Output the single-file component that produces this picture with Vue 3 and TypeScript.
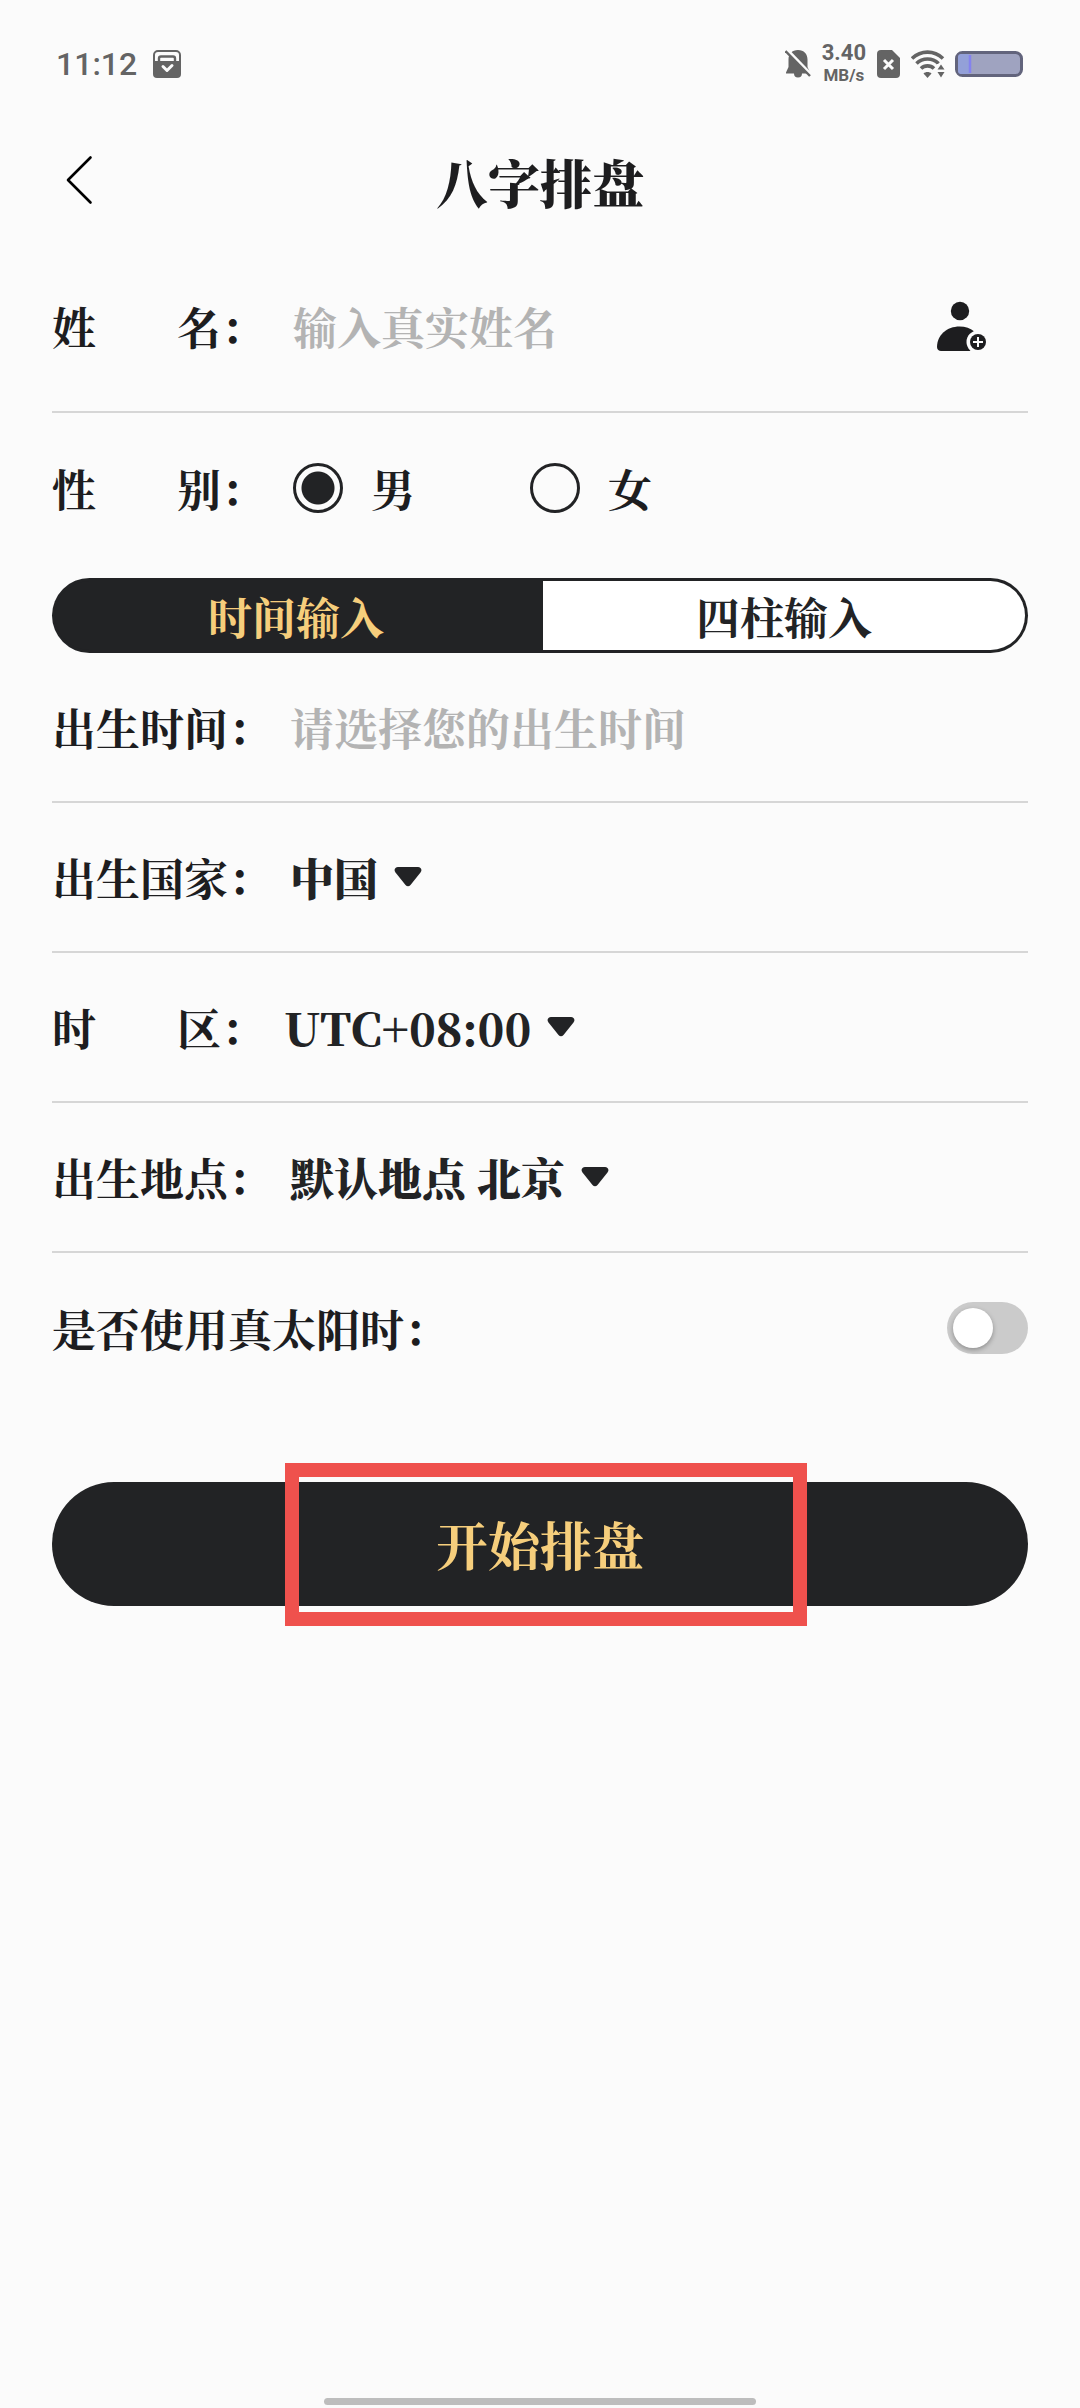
<script setup lang="ts">
import { ref } from 'vue'

type Gender = 'male' | 'female'
type Mode = 'time' | 'pillars'

const name = ref('')
const gender = ref<Gender>('male')
const mode = ref<Mode>('time')
const birthTime = ref('')
const country = ref('中国')
const timezone = ref('UTC+08:00')
const place = ref('默认地点 北京')
const trueSolarTime = ref(false)

const genders: { value: Gender; label: string }[] = [
  { value: 'male', label: '男' },
  { value: 'female', label: '女' },
]
const modes: { value: Mode; label: string }[] = [
  { value: 'time', label: '时间输入' },
  { value: 'pillars', label: '四柱输入' },
]
</script>

<template>
  <div class="page">
    <div class="status">
      <span class="clock">11:12</span>
      <svg class="pay" width="28" height="28" viewBox="0 0 28 28" aria-hidden="true">
        <path d="M1 13V5a4 4 0 0 1 4-4h18a4 4 0 0 1 4 4v8" fill="none" stroke="#646464" stroke-width="2" />
        <path d="M6 12V8.500a2 2 0 0 1 2-2h12a2 2 0 0 1 2 2V12" fill="none" stroke="#646464" stroke-width="2.400" />
        <path d="M0 11h28v13a4 4 0 0 1-4 4H4a4 4 0 0 1-4-4z" fill="#646464" />
        <path d="M10 16.500l4 4 5-5" fill="none" stroke="#fbfbfb" stroke-width="3" stroke-linecap="round" stroke-linejoin="round" />
      </svg>
      <span class="spacer"></span>
      <svg width="26" height="30" viewBox="0 0 26 30" aria-hidden="true">
        <path d="M13 1c6 0 9.500 4 9.500 9.500V18l2.500 5.500v1H17a4 4 0 0 1-8 0H1v-1L3.500 18v-7.500C3.500 5 7 1 13 1z" fill="#646464" />
        <path d="M2 0.500L26 25.500" stroke="#fbfbfb" stroke-width="3" />
        <path d="M0.500 2L25 27" stroke="#646464" stroke-width="2.400" />
      </svg>
      <span class="speed"><b>3.40</b><small>MB/s</small></span>
      <svg width="24" height="28" viewBox="0 0 24 28" aria-hidden="true">
        <path d="M4 0h11l8 8v16a4 4 0 0 1-4 4H4a4 4 0 0 1-4-4V4a4 4 0 0 1 4-4z" fill="#646464" />
        <path d="M7 10l9 9M16 10l-9 9" stroke="#fbfbfb" stroke-width="3" />
      </svg>
      <svg class="wifi" width="34" height="28" viewBox="0 0 34 28" aria-hidden="true">
        <g fill="none" stroke="#646464" stroke-width="3.600">
          <path d="M1 8.500C10 0 23 0 32 8.500" />
          <path d="M5.500 13.500c6-6 16-6 22 0" />
          <path d="M10 18.500c3.500-3.500 9.500-3.500 13 0" />
        </g>
        <path d="M12.500 23.500c2-2 6-2 8 0L16.500 28z" fill="#646464" />
        <path d="M26 14h8v14h-8z" fill="#fbfbfb" />
        <path d="M30 14.500l3.500 5h-7zM30 27.500l3.500-5.500h-7z" fill="#646464" />
      </svg>
      <svg width="68" height="26" viewBox="0 0 68 26" aria-hidden="true">
        <rect x="1.500" y="1.500" width="65" height="23" rx="6" fill="#9fa3c0" stroke="#62647c" stroke-width="3" />
        <path d="M6 3h8v20H6a3 3 0 0 1-3-3V6a3 3 0 0 1 3-3z" fill="#93a0d8" />
        <path d="M15 4v18" stroke="#8482ee" stroke-width="2.500" />
      </svg>
    </div>

    <header class="header">
      <button class="back" type="button" aria-label="返回">
        <svg width="28" height="50" viewBox="0 0 28 50" aria-hidden="true">
          <path d="M25.500 2.500L3 25l22.500 22.500" fill="none" stroke="#000" stroke-width="2.600" stroke-linecap="round" stroke-linejoin="round" />
        </svg>
      </button>
      <h1>八字排盘</h1>
    </header>

    <form class="form" @submit.prevent>
      <div class="row row-name">
        <label class="label short" for="name"><span>姓</span><span>名</span><span>：</span></label>
        <input id="name" v-model="name" class="text" type="text" placeholder="输入真实姓名" />
        <button class="contact" type="button" aria-label="选择联系人">
          <svg width="50" height="50" viewBox="0 0 50 50" aria-hidden="true">
            <circle cx="24" cy="10" r="9.200" fill="#1d1d1f" />
            <path d="M5 50c-2 0-4-1.500-4-4C1 34 11 25.500 23.500 25.500 35 25.500 45 33 46 44l-8 6z" fill="#1d1d1f" />
            <circle cx="42" cy="41" r="11.500" fill="#fbfbfb" />
            <path d="M34 50h16v-9z" fill="#fbfbfb" />
            <circle cx="42" cy="41" r="8" fill="#1d1d1f" />
            <path d="M42 36v10M37 41h10" stroke="#fbfbfb" stroke-width="2" />
          </svg>
        </button>
      </div>

      <div class="row row-gender" role="radiogroup" aria-label="性别">
        <span class="label short"><span>性</span><span>别</span><span>：</span></span>
        <label v-for="g in genders" :key="g.value" class="choice">
          <input v-model="gender" type="radio" name="gender" :value="g.value" />
          <span>{{ g.label }}</span>
        </label>
      </div>

      <div class="tabs">
        <button
          v-for="m in modes"
          :key="m.value"
          type="button"
          :class="{ active: mode === m.value }"
          :aria-pressed="mode === m.value"
          @click="mode = m.value"
        >{{ m.label }}</button>
      </div>

      <div class="row">
        <label class="label" for="time">出生时间：</label>
        <input id="time" v-model="birthTime" class="text" type="text" readonly placeholder="请选择您的出生时间" />
      </div>

      <div class="row">
        <label class="label" for="country">出生国家：</label>
        <select id="country" v-model="country"><option>中国</option></select>
        <svg class="caret" width="28" height="20" viewBox="0 0 28 20" aria-hidden="true"><path d="M4 0h20c3 0 4.500 3 2.500 5.500L16.500 18c-1.500 1.800-3.500 1.800-5 0L1.500 5.500C-.5 3 1 0 4 0z" fill="#222325" /></svg>
      </div>

      <div class="row">
        <label class="label short zone" for="zone"><span>时</span><span>区</span><span>：</span></label>
        <select id="zone" v-model="timezone"><option>UTC+08:00</option></select>
        <svg class="caret" width="28" height="20" viewBox="0 0 28 20" aria-hidden="true"><path d="M4 0h20c3 0 4.500 3 2.500 5.500L16.500 18c-1.500 1.800-3.500 1.800-5 0L1.500 5.500C-.5 3 1 0 4 0z" fill="#222325" /></svg>
      </div>

      <div class="row">
        <label class="label" for="place">出生地点：</label>
        <select id="place" v-model="place"><option>默认地点 北京</option></select>
        <svg class="caret" width="28" height="20" viewBox="0 0 28 20" aria-hidden="true"><path d="M4 0h20c3 0 4.500 3 2.500 5.500L16.500 18c-1.500 1.800-3.500 1.800-5 0L1.500 5.500C-.5 3 1 0 4 0z" fill="#222325" /></svg>
      </div>

      <div class="row row-solar">
        <label for="solar">是否使用真太阳时：</label>
        <input id="solar" v-model="trueSolarTime" class="switch" type="checkbox" role="switch" />
      </div>

      <div class="submit">
        <button type="submit">开始排盘</button>
        <span class="highlight"></span>
      </div>
    </form>

    <div class="home"></div>
  </div>
</template>

<style>
body {
  background: #fbfbfb;
}
</style>

<style scoped>
* {
  box-sizing: border-box;
}
.page {
  display: flex;
  flex-direction: column;
  min-height: 100vh;
  background: #fbfbfb;
  color: #1d1d1f;
  font-family: "Noto Serif CJK SC", "Noto Sans CJK SC", serif;
  font-size: 44px;
  font-weight: 700;
  line-height: 64px;
}
button,
input,
select {
  margin: 0;
  padding: 0;
  border: 0;
  background: none;
  color: inherit;
  font: inherit;
  appearance: none;
}
svg {
  display: block;
  flex: none;
}
.status {
  display: flex;
  align-items: center;
  height: 128px;
  padding: 0 57px 0 56px;
  color: #646464;
  font-family: Roboto, "Noto Sans", sans-serif;
}
.clock {
  font-size: 32px;
  font-weight: 500;
  line-height: 40px;
}
.pay {
  margin-left: 16px;
}
.spacer {
  flex: 1;
}
.speed {
  display: flex;
  flex-direction: column;
  align-items: center;
  margin: 0 11px;
}
.speed b {
  font-size: 22px;
  font-weight: 700;
  line-height: 22px;
}
.speed small {
  font-size: 17px;
  font-weight: 700;
  line-height: 22px;
}
.wifi {
  margin: 0 10px;
}
.header {
  position: relative;
  display: flex;
  align-items: center;
  justify-content: center;
  height: 108px;
}
.header h1 {
  margin: 0;
  font-size: 52px;
  font-weight: 900;
  line-height: 72px;
}
.back {
  position: absolute;
  left: 65px;
  top: 27px;
}
.form {
  padding: 4px 52px 0;
}
.row {
  display: flex;
  align-items: center;
  height: 150px;
  border-bottom: 2px solid #d6d6d6;
}
.row-name {
  height: 173px;
}
.row-gender {
  height: 165px;
  padding-bottom: 16px;
  border: 0;
}
.row-solar {
  justify-content: space-between;
  border: 0;
}
.label {
  flex: none;
  width: 238px;
}
.short {
  display: flex;
  width: 241px;
}
.short span:first-child {
  width: 125px;
}
.zone {
  width: 232px;
}
.text {
  flex: 1;
  min-width: 0;
  height: 64px;
  outline: 0;
}
.text::placeholder {
  color: #b3b3b3;
  opacity: 1;
}
.contact {
  margin-right: 42px;
}
.choice {
  display: flex;
  align-items: center;
  width: 237px;
  gap: 28px;
}
.choice input {
  flex: none;
  width: 50px;
  height: 50px;
  border: 3px solid #222325;
  border-radius: 50%;
}
.choice input:checked {
  background: radial-gradient(circle, #222325 16px, transparent 17px);
}
.tabs {
  display: flex;
  height: 75px;
  padding: 3px;
  border-radius: 38px;
  background: #222325;
}
.tabs button {
  flex: 1;
  background: #fff;
  color: #222325;
}
.tabs button:first-child {
  flex: 0 0 calc(50% + 3px);
  padding-right: 6px;
  border-radius: 35px 0 0 35px;
}
.tabs button:last-child {
  border-radius: 0 35px 35px 0;
}
.tabs .active {
  background: #222325;
  color: #f6ce7c;
}
select {
  field-sizing: content;
  height: 64px;
  color: #222325;
  font-weight: 900;
}
.caret {
  margin-left: 16px;
}
.switch {
  width: 81px;
  height: 52px;
  padding: 6px;
  border-radius: 26px;
  background: #cbcbcb;
}
.switch::before {
  content: "";
  display: block;
  width: 40px;
  height: 40px;
  border-radius: 50%;
  background: #fff;
  box-shadow: 0 2px 5px rgba(0, 0, 0, 0.3);
}
.switch:checked {
  background: #222325;
}
.switch:checked::before {
  margin-left: auto;
}
.submit {
  position: relative;
  margin-top: 79px;
}
.submit button {
  display: block;
  width: 100%;
  height: 124px;
  border-radius: 62px;
  background: #222325;
  color: #f6ce7c;
  font-size: 52px;
}
.highlight {
  position: absolute;
  top: -19px;
  right: 221px;
  bottom: -20px;
  left: 233px;
  border: 14px solid #ef514d;
  pointer-events: none;
}
.home {
  width: 40%;
  height: 7px;
  margin: auto auto 3px;
  border-radius: 4px;
  background: #bdbdbd;
}
</style>
